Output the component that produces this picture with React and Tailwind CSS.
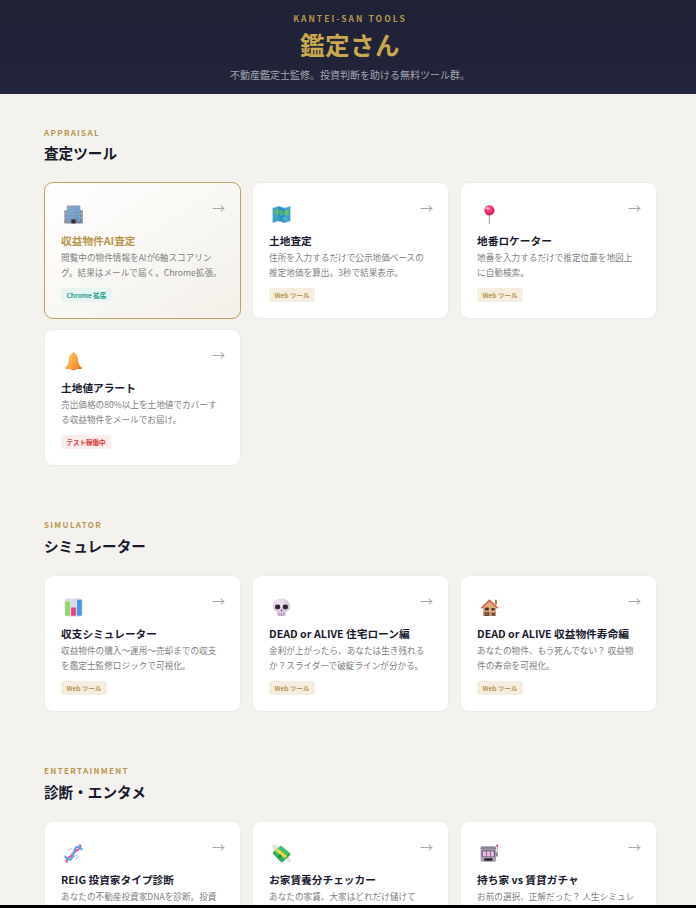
import React from "react";

const BuildingIcon = () => (
  <svg viewBox="0 0 32 32" className="h-full w-full">
    <defs>
      <linearGradient id="bld" x1="0" y1="0" x2="1" y2="1">
        <stop offset="0" stopColor="#aaa4b6" />
        <stop offset="1" stopColor="#767c92" />
      </linearGradient>
    </defs>
    <rect x="0.5" y="9" width="5" height="22" fill="#8f8da6" />
    <rect x="26.5" y="9" width="5" height="22" fill="#7f86a0" />
    <rect x="4.5" y="1" width="23" height="30" rx="1" fill="url(#bld)" />
    {[3, 8, 13, 18].map((y) =>
      [6.5, 12, 17.5, 23].map((x) => <rect key={`${x}-${y}`} x={x} y={y} width="3.6" height="3.8" fill="#62b2e6" />)
    )}
    <rect x="6.5" y="23" width="3.6" height="3.8" fill="#62b2e6" />
    <rect x="23" y="23" width="3.6" height="3.8" fill="#62b2e6" />
    <rect x="12.5" y="24.5" width="7" height="6.5" fill="#262d3b" />
    <rect x="1.5" y="13" width="2.4" height="3" fill="#86c4ec" />
    <rect x="1.5" y="20" width="2.4" height="3" fill="#86c4ec" />
    <rect x="28" y="13" width="2.4" height="3" fill="#86c4ec" />
    <rect x="28" y="20" width="2.4" height="3" fill="#86c4ec" />
  </svg>
);

const MapIcon = () => (
  <svg viewBox="0 0 32 32" className="h-full w-full">
    <path d="M1 5 L11 2 L21 5 L31 2 V27 L21 30 L11 27 L1 30 Z" fill="#3f9fd8" />
    <path d="M11 2 L21 5 V30 L11 27 Z" fill="#2f8fc9" />
    <path d="M4 8 L10 6 L12 12 L8 17 L4 15 Z" fill="#5dbb63" />
    <path d="M13 9 L19 10 L20 16 L15 19 L12 14 Z" fill="#4caf73" />
    <path d="M22 9 L28 7 L29 15 L24 18 L21 14 Z" fill="#66c267" />
    <path d="M5 20 L10 21 L9 26 L4 27 Z" fill="#3fa6a0" />
    <path d="M17 21 L24 21 L27 25 L20 27 Z" fill="#4db6ac" />
    <path d="M1 5 L11 2 L21 5 L31 2" fill="none" stroke="#b6d4ea" strokeWidth="1" />
    <path d="M1 30 L11 27 L21 30 L31 27" fill="none" stroke="#a5b8e0" strokeWidth="1.2" />
  </svg>
);

const PinIcon = () => (
  <svg viewBox="0 0 32 32" className="h-full w-full">
    <defs>
      <radialGradient id="pin" cx="0.4" cy="0.3" r="0.75">
        <stop offset="0" stopColor="#fb7aa0" />
        <stop offset="0.55" stopColor="#ee2c6c" />
        <stop offset="1" stopColor="#c81a55" />
      </radialGradient>
    </defs>
    <rect x="14.8" y="15" width="2" height="17" rx="1" fill="#a9a9ad" />
    <circle cx="15.8" cy="9" r="8.6" fill="url(#pin)" />
    <ellipse cx="13" cy="5.5" rx="2.6" ry="1.6" fill="#ffc0d4" />
  </svg>
);

const BellIcon = () => (
  <svg viewBox="0 0 32 32" className="h-full w-full">
    <defs>
      <linearGradient id="bell" x1="0" y1="0" x2="1" y2="0.6">
        <stop offset="0" stopColor="#fcd06a" />
        <stop offset="0.6" stopColor="#fba63c" />
        <stop offset="1" stopColor="#f0822a" />
      </linearGradient>
    </defs>
    <circle cx="16" cy="3.5" r="2.5" fill="#f59a34" />
    <path d="M16 2.5 C9.5 2.5 8.5 9 8 15 C7.6 20 5.8 23 2 26 C1 27.5 2 28.5 3.5 28.5 H28.5 C30 28.5 31 27.5 30 26 C26.2 23 24.4 20 24 15 C23.5 9 22.5 2.5 16 2.5 Z" fill="url(#bell)" />
    <path d="M11.5 28.5 A4.6 3 0 0 0 20.5 28.5 Z" fill="#e36f22" />
  </svg>
);

const ChartIcon = () => (
  <svg viewBox="0 0 32 32" className="h-full w-full">
    <rect x="1" y="1" width="30" height="30" rx="4" fill="#dcd8e6" />
    <rect x="2" y="6" width="8" height="24" rx="1.5" fill="#8fd96c" />
    <rect x="12" y="16" width="8" height="14" rx="1.5" fill="#ee3d86" />
    <rect x="22" y="3" width="8" height="27" rx="1.5" fill="#3f9be8" />
  </svg>
);

const SkullIcon = () => (
  <svg viewBox="0 0 32 32" className="h-full w-full">
    <defs>
      <radialGradient id="sk" cx="0.4" cy="0.3" r="0.8">
        <stop offset="0" stopColor="#f1e8f0" />
        <stop offset="1" stopColor="#c8b4cc" />
      </radialGradient>
    </defs>
    <path d="M16 1 C7 1 1.5 7 1.5 14.5 C1.5 19 4 21.5 8 22.5 L9 29 C9.3 30.5 22.7 30.5 23 29 L24 22.5 C28 21.5 30.5 19 30.5 14.5 C30.5 7 25 1 16 1 Z" fill="url(#sk)" />
    <ellipse cx="9.5" cy="15" rx="4.4" ry="4" fill="#2f2731" />
    <ellipse cx="22.5" cy="15" rx="4.4" ry="4" fill="#2f2731" />
    <path d="M16 18.5 L18 22 H14 Z" fill="#6d5a70" />
    <path d="M13 25 V30 M16 25 V30.5 M19 25 V30" stroke="#9b88a0" strokeWidth="1" />
  </svg>
);

const HouseIcon = () => (
  <svg viewBox="0 0 32 32" className="h-full w-full">
    <rect x="25" y="3" width="3.5" height="8" fill="#a9785c" />
    <path d="M5 15 L16 5 L27 15 V30 H5 Z" fill="#e0ab7c" />
    <path d="M1 16.5 L16 2 L31 16.5 L29 18 L16 6 L3 18 Z" fill="#d4604a" />
    <path d="M5 24 H27 V30 H5 Z" fill="#c48e63" />
    <rect x="8" y="16" width="7" height="5" rx="2" fill="#4a3a36" />
    <rect x="19" y="17" width="6" height="4" rx="1.5" fill="#4a3a36" />
    <path d="M8 24 H15 V30 H8 Z" fill="#3d3230" />
    <path d="M9 26 H14 M9 28 H14" stroke="#c9b6a5" strokeWidth="0.8" />
    <rect x="20" y="25" width="5" height="5" fill="#6a4a3a" />
  </svg>
);

const DnaIcon = () => (
  <svg viewBox="0 0 32 32" className="h-full w-full">
    <path d="M7 11 L13 7 M10 17 L19 11 M13 24 L22 18 M20 26 L25 21" stroke="#c9bddf" strokeWidth="1.8" />
    <path d="M5 30 C1 22 12 24 16 16 C20 8 31 11 27 2" fill="none" stroke="#ef4a7e" strokeWidth="3.4" strokeLinecap="round" />
    <path d="M2 21 C10 32 14 25 16 16 C18 7 22 0 30 9" fill="none" stroke="#5aa6ec" strokeWidth="3.4" strokeLinecap="round" />
  </svg>
);

const MoneyIcon = () => (
  <svg viewBox="0 0 32 32" className="h-full w-full">
    <path d="M0 2 C5 1 10 3 13 7 L6 14 C3 10 1 7 0 2 Z" fill="#dfe3d8" />
    <path d="M23 25 C25 28 27 31 31 31 C32 27 30 22 27 20 Z" fill="#dfe3d8" />
    <path d="M15 3 L30 15 C31.5 16.5 31.5 18 30 19.5 L19 29.5 C17.5 31 15.5 31 14 29.5 L2 17 C1 15.5 1 14 2.5 13 Z" fill="#2faa55" />
    <path d="M15 3 L30 15 L18.5 25 L2.5 13 Z" fill="#3fc26a" />
    <path d="M9.5 7.5 L25.5 20 L21.5 24 L5.5 11 Z" fill="#f5d44a" />
    <circle cx="13.5" cy="20.5" r="2.8" fill="#1f8f44" />
  </svg>
);

const SlotIcon = () => (
  <svg viewBox="0 0 32 32" className="h-full w-full">
    <rect x="1" y="4" width="26" height="26" rx="3" fill="#a99db0" />
    <rect x="1" y="4" width="26" height="5" rx="2" fill="#8e8296" />
    <rect x="3" y="11" width="22" height="11" rx="1.5" fill="#57506a" />
    <rect x="4.5" y="12" width="5.6" height="9" rx="1" fill="#e9b7e4" />
    <rect x="11.2" y="12" width="5.6" height="9" rx="1" fill="#e9b7e4" />
    <rect x="17.9" y="12" width="5.6" height="9" rx="1" fill="#e9b7e4" />
    <rect x="7" y="24" width="14" height="4" rx="1" fill="#29242f" />
    <rect x="27" y="14" width="3" height="7" fill="#8e8296" />
    <rect x="28.2" y="3" width="1.4" height="12" fill="#9e98a4" />
    <circle cx="29" cy="2.5" r="1.8" fill="#e8354a" />
  </svg>
);

const sections = [
  {
    label: "APPRAISAL",
    title: "査定ツール",
    pad: "pt-[34px]",
    headGap: "mt-[4px]",
    cards: [
      { icon: <BuildingIcon />, name: "収益物件AI査定", desc: "閲覧中の物件情報をAIが6軸スコアリング。結果はメールで届く。Chrome拡張。", tag: "Chrome 拡張", kind: "chrome", featured: true },
      { icon: <MapIcon />, name: "土地査定", desc: "住所を入力するだけで公示地価ベースの推定地価を算出。3秒で結果表示。", tag: "Web ツール", kind: "web" },
      { icon: <PinIcon />, name: "地番ロケーター", desc: "地番を入力するだけで推定位置を地図上に自動検索。", tag: "Web ツール", kind: "web" },
      { icon: <BellIcon />, name: "土地値アラート", desc: "売出価格の80%以上を土地値でカバーする収益物件をメールでお届け。", tag: "テスト稼働中", kind: "test" },
    ],
  },
  {
    label: "SIMULATOR",
    title: "シミュレーター",
    pad: "pt-[54px]",
    headGap: "mt-[5px]",
    cards: [
      { icon: <ChartIcon />, name: "収支シミュレーター", desc: "収益物件の購入〜運用〜売却までの収支を鑑定士監修ロジックで可視化。", tag: "Web ツール", kind: "web" },
      { icon: <SkullIcon />, name: "DEAD or ALIVE 住宅ローン編", desc: "金利が上がったら、あなたは生き残れるか？スライダーで破綻ラインが分かる。", tag: "Web ツール", kind: "web" },
      { icon: <HouseIcon />, name: "DEAD or ALIVE 収益物件寿命編", desc: "あなたの物件、もう死んでない？ 収益物件の寿命を可視化。", tag: "Web ツール", kind: "web" },
    ],
  },
  {
    label: "ENTERTAINMENT",
    title: "診断・エンタメ",
    pad: "pt-[54px]",
    headGap: "mt-[5px]",
    cards: [
      { icon: <DnaIcon />, name: "REIG 投資家タイプ診断", desc: "あなたの不動産投資家DNAを診断。投資スタイルが分かる。", tag: "Web ツール", kind: "web" },
      { icon: <MoneyIcon />, name: "お家賃養分チェッカー", desc: "あなたの家賃、大家はどれだけ儲けて\nいるのか。", tag: "Web ツール", kind: "web" },
      { icon: <SlotIcon />, name: "持ち家 vs 賃貸ガチャ", desc: "お前の選択、正解だった？ 人生シミュレーション。", tag: "Web ツール", kind: "web" },
    ],
  },
];

const tagStyles = {
  web: "bg-[#f5eee0] text-[#b8964f]",
  chrome: "bg-[#e6f5f2] text-[#2a9d8f]",
  test: "bg-[#fdecec] text-[#d63a3a]",
};

function Card({ card }) {
  return (
    <div
      className={`relative h-[137px] rounded-[9px] border px-4 pt-[22px] ${
        card.featured
          ? "border-[#c0a060] bg-gradient-to-br from-white to-[#f3f0e9]"
          : "border-[#eeece8] bg-white"
      }`}
    >
      <span className="absolute right-[15px] top-[15px] text-[13px] leading-5 text-[#a8a8a8]">→</span>
      <div className="ml-[3px] h-[19px] w-[19px]">{card.icon}</div>
      <h3
        className={`mt-[9px] text-[10.7px] font-bold leading-[16px] ${
          card.featured ? "text-[#b8964f]" : "text-[#1a1a2e]"
        }`}
      >
        {card.name}
      </h3>
      <p className="mt-[1px] whitespace-pre-line text-[8.65px] leading-[14.5px] text-[#808080]">{card.desc}</p>
      <span
        className={`absolute bottom-[16px] left-4 rounded-[3px] px-[5.5px] text-[6.5px] font-bold leading-[14px] ${tagStyles[card.kind]}`}
      >
        {card.tag}
      </span>
    </div>
  );
}

export default function App() {
  return (
    <div className="flex h-[908px] w-[696px] flex-col overflow-hidden bg-[#f4f2ee] font-['Noto_Sans_CJK_JP','Noto_Sans',sans-serif]">
      <div className="flex-1 overflow-hidden">
        <div className="w-[700px]">
          <header className="flex h-[94px] flex-col items-center bg-gradient-to-b from-[#1f2135] to-[#22253b] pt-[11.5px] text-center">
            <p className="text-[8.5px] font-bold leading-[12px] tracking-[0.24em] text-[#b8964f]">KANTEI-SAN TOOLS</p>
            <h1 className="mt-[4px] text-[24.5px] font-bold leading-[34px] tracking-[0.02em] text-[#c9a84e]">鑑定さん</h1>
            <p className="mt-[5px] text-[10px] leading-[16px] text-[#a3a4ae]">不動産鑑定士監修。投資判断を助ける無料ツール群。</p>
          </header>
          <main className="pl-[44px] pr-[43px]">
            {sections.map((s) => (
              <section key={s.label} className={s.pad}>
                <p className="text-[8px] font-bold leading-[10px] tracking-[0.17em] text-[#b8964f]">{s.label}</p>
                <h2 className={`${s.headGap} text-[14.6px] font-bold leading-[22px] text-[#1a1a2e]`}>{s.title}</h2>
                <div className="mt-[18px] grid grid-cols-3 gap-x-[11px] gap-y-[10px]">
                  {s.cards.map((c) => (
                    <Card key={c.name} card={c} />
                  ))}
                </div>
              </section>
            ))}
          </main>
        </div>
      </div>
      <div className="h-[3px] bg-black" />
    </div>
  );
}
